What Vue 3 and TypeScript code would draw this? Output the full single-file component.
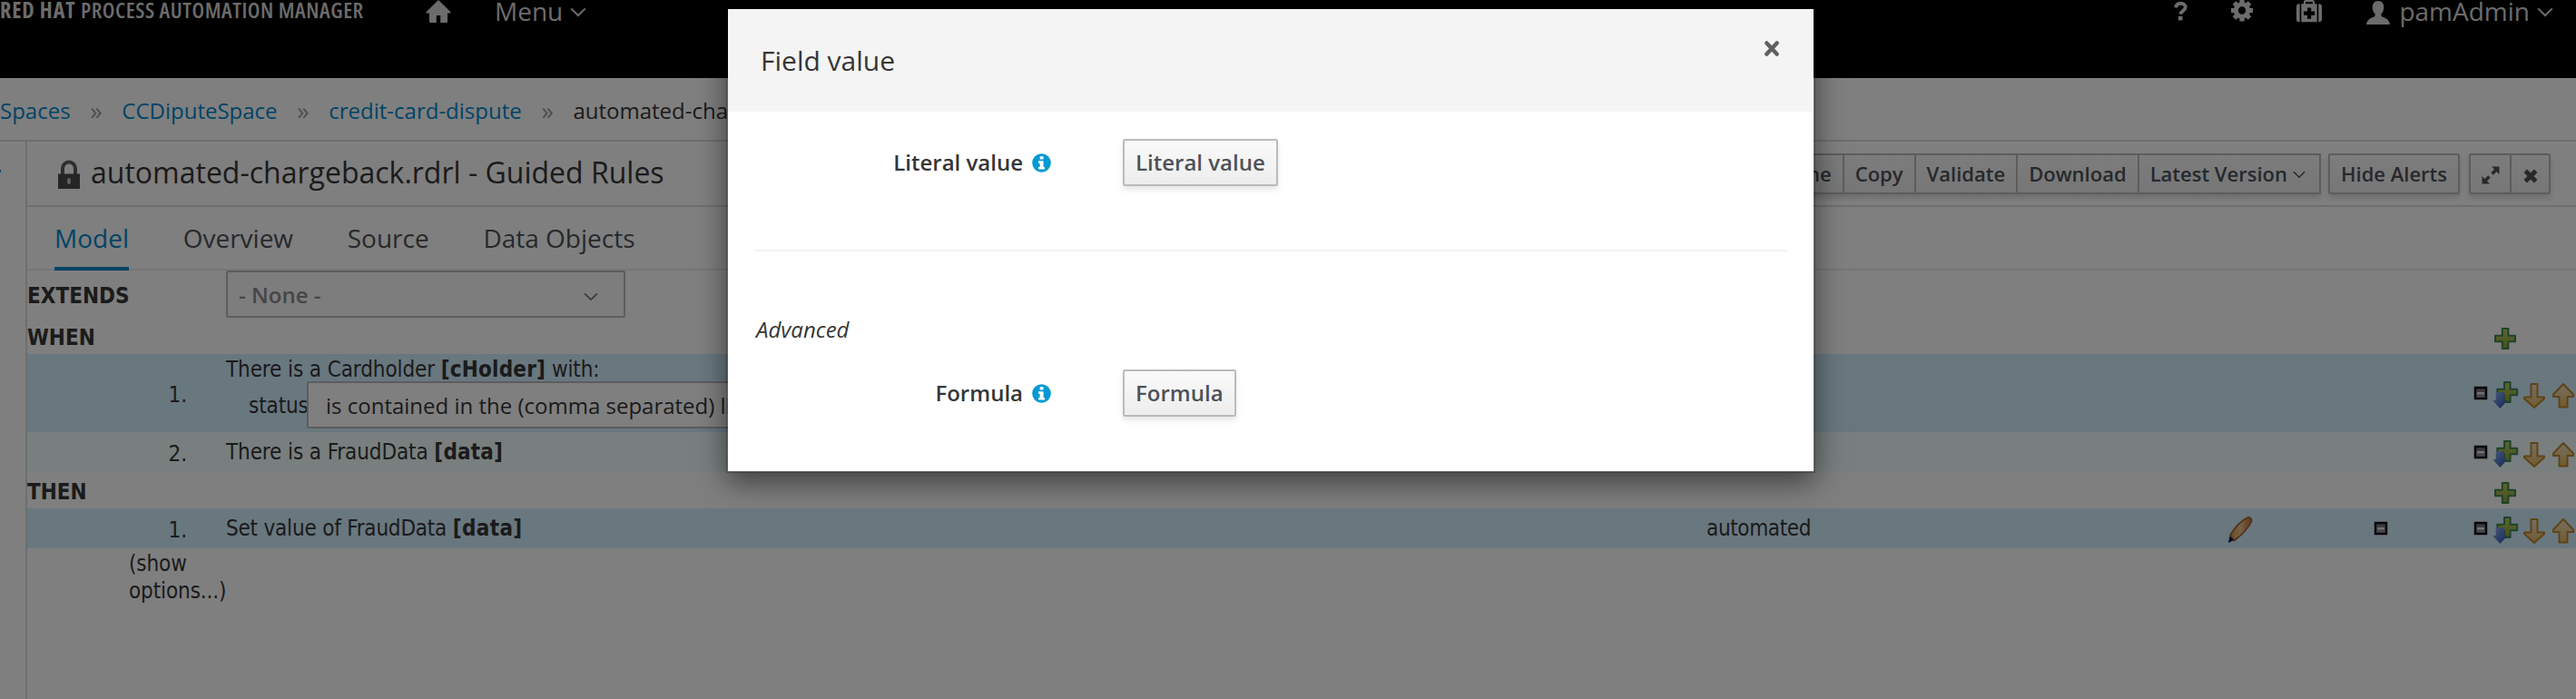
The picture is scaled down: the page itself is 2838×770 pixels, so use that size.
<script setup lang="ts">
interface Crumb { label: string; link: boolean }
interface Rule {
  no: string
  tone: 'blue' | 'pale'
  text: string
  bound: string
  tail?: string
  field?: string
  operator?: string
  value?: string
}
interface Section { title: string; rules: Rule[] }
interface Choice { label: string }

const crumbs: Crumb[] = [
  { label: 'Spaces', link: true },
  { label: 'CCDiputeSpace', link: true },
  { label: 'credit-card-dispute', link: true },
  { label: 'automated-chargeback', link: false },
]
const tabs: string[] = ['Model', 'Overview', 'Source', 'Data Objects']
const activeTab = 'Model'
const actions: string[] = ['Rename', 'Copy', 'Validate', 'Download']
const sections: Section[] = [
  {
    title: 'WHEN',
    rules: [
      {
        no: '1.', tone: 'blue', text: 'There is a Cardholder ', bound: '[cHolder]', tail: ' with:',
        field: 'status', operator: 'is contained in the (comma separated) list',
      },
      { no: '2.', tone: 'pale', text: 'There is a FraudData ', bound: '[data]' },
    ],
  },
  {
    title: 'THEN',
    rules: [
      { no: '1.', tone: 'blue', text: 'Set value of FraudData ', bound: '[data]', value: 'automated' },
    ],
  },
]
const basic: Choice = { label: 'Literal value' }
const advanced: Choice = { label: 'Formula' }
</script>

<template>
  <div class="page">
    <svg class="defs" width="0" height="0" aria-hidden="true">
      <defs>
        <linearGradient id="gPlus" x1="0" y1="0" x2="0" y2="1">
          <stop offset="0" stop-color="#bccc5c" /><stop offset="1" stop-color="#88a03a" />
        </linearGradient>
        <linearGradient id="gBlue" x1="0" y1="0" x2="1" y2="1">
          <stop offset="0" stop-color="#8fb2f4" /><stop offset="1" stop-color="#2a4ca8" />
        </linearGradient>
        <linearGradient id="gGold" x1="0" y1="0" x2="0" y2="1">
          <stop offset="0" stop-color="#eee0c4" /><stop offset="1" stop-color="#e2b860" />
        </linearGradient>
        <linearGradient id="gPen" x1="0" y1="0" x2="1" y2="0">
          <stop offset="0" stop-color="#d8984e" /><stop offset="0.5" stop-color="#eec08a" /><stop offset="1" stop-color="#b87238" />
        </linearGradient>
        <linearGradient id="gBox" x1="0" y1="0" x2="0" y2="1">
          <stop offset="0" stop-color="#666" /><stop offset="1" stop-color="#999" />
        </linearGradient>
        <symbol id="plus" viewBox="0 0 32 32">
          <path d="M12.8 5h6.6v7.7h7.6v6.6h-7.6V27h-6.6v-7.700H5v-6.600h7.800z" fill="url(#gPlus)" stroke="#3f8650" stroke-width="2" stroke-linejoin="round" />
        </symbol>
        <symbol id="plusDown" viewBox="0 0 32 32">
          <path d="M15 1h6.600v7.700h7.600v6.600h-7.600V23h-6.600v-7.700H7.300V8.700H15z" fill="url(#gPlus)" stroke="#3f8658" stroke-width="2" stroke-linejoin="round" />
          <path d="M5.700 12h9.300v9h3.600L10.400 30 2.200 21h3.500z" fill="url(#gBlue)" />
        </symbol>
        <symbol id="down" viewBox="0 0 32 32">
          <path d="M12.500 3h7v14.500H27V19L16 29 5 19v-1.500h7.500z" fill="url(#gGold)" stroke="#bd8730" stroke-width="2" stroke-linejoin="round" />
        </symbol>
        <symbol id="up" viewBox="0 0 32 32">
          <path d="M16 3l11 11.500V17h-6.500v11.500h-9V17H5v-2.500z" fill="url(#gGold)" stroke="#bd8730" stroke-width="2" stroke-linejoin="round" />
        </symbol>
        <symbol id="minus" viewBox="0 0 32 32">
          <rect x="12.500" y="4.500" width="17" height="17" rx="1" fill="#ddd" opacity="0.500" />
          <rect x="15" y="7" width="12" height="12" fill="url(#gBox)" stroke="#0a0a20" stroke-width="2.400" />
          <rect x="17" y="12" width="8" height="2.400" fill="#e4e4e4" />
        </symbol>
        <symbol id="chevron" viewBox="0 0 18 11">
          <path d="M1.200 1.400L9 9l7.800-7.600" fill="none" stroke="currentColor" stroke-width="2" />
        </symbol>
        <symbol id="info" viewBox="0 0 21 21">
          <circle cx="10.500" cy="10.500" r="10.300" fill="#0099d3" />
          <rect x="8.600" y="3.200" width="4" height="3.400" rx="0.600" fill="#fff" />
          <path d="M7 8.300h5.600v6.700H14v2.500H7V15h1.600v-4.200H7z" fill="#fff" />
        </symbol>
      </defs>
    </svg>

    <header class="nav">
      <div class="brand"><b>RED HAT</b><span class="product">PROCESS AUTOMATION MANAGER</span></div>
      <svg class="home" width="28" height="26" viewBox="0 0 28 26"><path d="M14 0l13.500 13.300c.4.600.1 1.200-.6 1.200H24V23.500c0 .9-.5 1.500-1.400 1.500H16.200V17h-4.400v8H5.400C4.500 25 4 24.400 4 23.500v-9H1.100c-.7 0-1-.6-.6-1.200z" fill="currentColor" /></svg>
      <span class="menu">Menu</span>
      <svg class="chev" width="18" height="11"><use href="#chevron" /></svg>
      <div class="tools">
        <svg class="help" width="15" height="21" viewBox="0 0 15 21"><path d="M2 6.300C2.600 3.300 4.600 1.800 7.400 1.800c3.200 0 5.300 1.700 5.300 4.300 0 3.800-5.200 3.800-5.200 7.600" fill="none" stroke="currentColor" stroke-width="3.800" /><rect x="4.900" y="15.800" width="4.600" height="4.600" fill="currentColor" /></svg>
        <svg class="gear" width="24" height="25" viewBox="-12 -12.500 24 25">
          <circle r="6.700" fill="none" stroke="currentColor" stroke-width="5" />
          <g fill="currentColor">
            <rect v-for="n in 8" :key="n" x="-2.600" y="-12" width="5.200" height="5" :transform="`rotate(${n * 45})`" />
          </g>
        </svg>
        <svg class="kit" width="28" height="25" viewBox="0 0 28 25" fill="currentColor">
          <path d="M3.700 4.300v20H3a3 3 0 0 1-3-3v-14a3 3 0 0 1 3-3zM24.300 4.300v20h.7a3 3 0 0 0 3-3v-14a3 3 0 0 0-3-3z" />
          <path fill-rule="evenodd" d="M5.300 4.300H8V2.200C8 .8 8.800 0 10 0h8c1.200 0 2 .8 2 2.200v2.100h2.700v20H5.300zM10 2v2.300h8V2zM12 8.500v4H8v4.200h4v4h4.200v-4h4v-4.200h-4v-4z" />
        </svg>
        <svg class="user" width="26" height="26" viewBox="0 0 26 26"><path d="M13 0c4 0 6.300 2.800 6.300 7 0 3.200-1.300 5.700-2.900 7.200-.5 2 .3 3 2.300 3.900 3.300 1.400 6.300 2.600 7.300 7.900H0c1-5.300 4-6.500 7.300-7.900 2-.9 2.800-1.900 2.300-3.900C8 12.700 6.700 10.200 6.700 7c0-4.200 2.300-7 6.300-7z" fill="currentColor" /></svg>
        <span class="who">pamAdmin</span>
        <svg class="chev" width="18" height="11"><use href="#chevron" /></svg>
      </div>
    </header>

    <nav class="crumbs">
      <template v-for="(c, i) in crumbs" :key="c.label">
        <span v-if="i > 0" class="sep">»</span>
        <span :class="c.link ? 'link' : 'here'">{{ c.label }}</span>
      </template>
    </nav>

    <div class="body">
      <aside class="rail"><i></i></aside>
      <main class="editor">
        <div class="titlebar">
          <svg class="lock" width="26" height="33" viewBox="0 0 26 33">
            <path d="M6 16V9.500a7 7 0 0 1 14 0V16" fill="none" stroke="#5c5c5c" stroke-width="4" />
            <rect x="1" y="15.500" width="24" height="16.500" fill="#4a4a4a" />
            <rect x="11" y="20" width="4" height="7" rx="2" fill="#bbb" />
          </svg>
          <h1>automated-chargeback.rdrl - Guided Rules</h1>
          <div class="bar">
            <div class="group">
              <button v-for="a in actions" :key="a">{{ a }}</button>
              <button class="version">Latest Version<svg width="14" height="9"><use href="#chevron" /></svg></button>
            </div>
            <div class="group alerts"><button>Hide Alerts</button></div>
            <div class="group icons">
              <button>
                <svg width="20" height="20" viewBox="0 0 20 20" fill="currentColor"><path d="M11 .5h8.500V9l-3-3-3.700 3.700-2.500-2.500L14 3.500zM9 19.500H.5V11l3 3 3.700-3.700 2.500 2.500L6 16.500z" /></svg>
              </button>
              <button>
                <svg width="16" height="16" viewBox="0 0 16 16"><path d="M2.300 2.300l11.400 11.400M13.700 2.300L2.300 13.700" stroke="currentColor" stroke-width="5" /></svg>
              </button>
            </div>
          </div>
        </div>

        <div class="tabs">
          <a v-for="t in tabs" :key="t" :class="{ active: t === activeTab }">{{ t }}</a>
        </div>

        <div class="extends">
          <b>EXTENDS</b>
          <div class="select">- None -<svg width="16" height="10"><use href="#chevron" /></svg></div>
        </div>

        <template v-for="s in sections" :key="s.title">
          <div class="section"><b>{{ s.title }}</b><svg class="ic"><use href="#plus" /></svg></div>
          <div v-for="r in s.rules" :key="r.no" class="rule" :class="[r.tone, { tall: r.field, valued: r.value }]">
            <span class="no">{{ r.no }}</span>
            <div class="what">
              <div class="line">{{ r.text }}<b>{{ r.bound }}</b>{{ r.tail }}</div>
              <div v-if="r.field" class="cond"><span class="field">{{ r.field }}</span><div class="op">{{ r.operator }}</div></div>
            </div>
            <span class="value">{{ r.value }}</span>
            <div class="edit">
              <svg v-if="r.value" class="pen" width="32" height="34" viewBox="0 0 32 34">
                <path d="M2.500 23.500L24 1.500h5.500l1 7L11 30l-8.500 2z" fill="#ddd" opacity="0.250" />
                <path d="M5 22.500C10 14 17 6.500 24.500 3c2-.5 4.500 1.500 4 4.500C25 15 18 22 9.500 28.500z" fill="url(#gPen)" stroke="#99602f" stroke-width="1.600" />
                <path d="M4.500 23.500l4.500 4.500-6 3z" fill="#101048" />
              </svg>
            </div>
            <div class="remove"><svg v-if="r.value" class="ic"><use href="#minus" /></svg></div>
            <div class="moves">
              <svg v-for="k in ['minus', 'plusDown', 'down', 'up']" :key="k" class="ic"><use :href="'#' + k" /></svg>
            </div>
          </div>
        </template>
        <div class="more">(show options...)</div>
      </main>
    </div>

    <div class="backdrop"></div>

    <section class="modal">
      <div class="head">
        <h2>Field value</h2>
        <svg class="close" width="16" height="19" viewBox="0 0 16 19"><path d="M2.400 3.400l11.200 12.200M13.600 3.400L2.400 15.600" stroke="#606060" stroke-width="4.400" stroke-linecap="round" /></svg>
      </div>
      <div class="content">
        <div class="row">
          <label>{{ basic.label }}</label>
          <svg width="21" height="21"><use href="#info" /></svg>
          <button>{{ basic.label }}</button>
        </div>
        <hr />
        <em>Advanced</em>
        <div class="row">
          <label>{{ advanced.label }}</label>
          <svg width="21" height="21"><use href="#info" /></svg>
          <button>{{ advanced.label }}</button>
        </div>
      </div>
    </section>
  </div>
</template>

<style>
body { margin: 0; overflow: hidden; }
</style>

<style scoped>
* { box-sizing: border-box; }
.page {
  position: relative; width: 2838px; height: 770px; overflow: hidden; background: #fff;
  font-family: "Open Sans", sans-serif; font-size: 24px; color: #363636;
  display: flex; flex-direction: column;
}
svg { display: block; flex: none; }
.defs { position: absolute; }

.nav { flex: none; height: 86px; display: flex; align-items: flex-start; background: #000; color: #d8d8d8; font-size: 28px; line-height: 24px; white-space: nowrap; }
.brand { width: 469px; display: flex; font-size: 24px; line-height: 22px; font-stretch: 75%; }
.brand b { width: 89px; letter-spacing: 0.900px; }
.product { font-weight: 600; letter-spacing: 0.550px; }
.home { margin-right: 48px; }
.menu { margin-right: 8px; }
.chev { margin-top: 8px; }
.tools { margin-left: auto; display: flex; align-items: flex-start; margin-right: 25px; }
.help { margin: 2px 48px 0 0; }
.gear { margin: -1px 48px 0 0; }
.kit { margin-right: 49px; }
.user { margin: 1px 10px 0 0; }
.who { margin-right: 8px; }

.crumbs { flex: none; height: 70px; padding-top: 3px; display: flex; align-items: center; border-bottom: 2px solid #dcdcdc; white-space: nowrap; }
.link { color: #0088ce; }
.sep { width: 56.700px; text-align: center; font-size: 27px; color: #9c9c9c; }

.body { flex: 1; display: flex; }
.rail { flex: none; width: 30px; border-right: 2px solid #dcdcdc; }
.rail i { display: block; width: 1px; height: 3px; margin-top: 31px; background: #0088ce; }
.editor { flex: 1; min-width: 0; }

.titlebar { height: 72px; border-bottom: 2px solid #dcdcdc; display: flex; align-items: center; padding: 0 28px 3px 33px; }
.lock { margin: 5px 11px 0 0; }
h1 { margin: 0; font-size: 32px; font-weight: 400; line-height: 44px; white-space: nowrap; }
.bar { margin-left: auto; display: flex; padding-top: 4px; }
.group { display: flex; border: 2px solid #bbb; box-shadow: 0 4px 6px rgba(3, 3, 3, 0.150); height: 45px; background: linear-gradient(#fafafa, #ededed); }
.group button { border: 0; border-left: 2px solid #bbb; background: none; padding: 0 12px; font: 600 22px/41px "Open Sans", sans-serif; color: #4d5258; display: flex; align-items: center; white-space: nowrap; }
.group button:first-child { border-left: 0; }
.group .version { padding-right: 15px; }
.version svg { margin: 1px 0 0 6px; }
.alerts { margin: 0 10px 0 8px; border-radius: 2px; }
.icons { border-radius: 2px; width: 90px; }
.icons button { width: 43px; padding: 4px 0 0; justify-content: center; }
.icons button:first-child { width: 43px; padding-top: 2px; }

.tabs { height: 70px; border-bottom: 2px solid #ededed; display: flex; gap: 59.700px; padding-left: 30px; font-size: 28px; line-height: 68px; }
.tabs a { height: 70px; color: #4d5258; }
.tabs .active { color: #0088ce; border-bottom: 4px solid #0088ce; }

.extends, .section, .rule, .more { font-family: "DejaVu Sans Condensed", "DejaVu Sans", sans-serif; font-stretch: condensed; letter-spacing: -0.100px; }
.extends { height: 52px; display: flex; align-items: center; }
.extends b { width: 219px; padding-top: 4px; letter-spacing: 0; }
.select { width: 440px; height: 52px; border: 2px solid #bbb; border-radius: 2px; background: #fafafa; padding: 0 28px 0 12px; display: flex; align-items: center; justify-content: space-between; font: 600 24px "Open Sans", sans-serif; letter-spacing: 0; color: #8b8d8f; }
.select svg { margin-top: 6px; color: #777; }
.section { height: 40px; display: flex; align-items: center; justify-content: space-between; padding-right: 62px; }
.section b { padding-top: 4px; letter-spacing: 0; }
.ic { width: 32px; height: 32px; margin-top: 6px; }
.rule { height: 44px; display: grid; grid-template-columns: 219px 1631px 572px 150px 110px 128px; align-items: center; overflow: hidden; }
.rule.tall { height: 86px; }
.blue { background: #d2eeff; }
.pale { background: #f1fffc; }
.no { width: 176px; text-align: right; padding-top: 4px; }
.line { white-space: pre; line-height: 27px; }
.line b { letter-spacing: 0.200px; }
.valued .line { letter-spacing: -0.200px; }
.valued .line b { letter-spacing: 0.350px; }
.value { letter-spacing: -0.350px; }
.tall .what { align-self: start; padding-top: 3px; }
.tall .line { height: 27px; line-height: 29px; }
.cond { display: flex; padding-left: 25px; }
.field { width: 64px; line-height: 55px; height: 52px; white-space: nowrap; }
.op { width: 900px; height: 52px; border: 2px solid #bbb; border-radius: 2px; background: #fff; padding-left: 19px; font: 24px/49px "Open Sans", sans-serif; letter-spacing: 0; }
.pen { margin-top: 3px; }
.moves { display: flex; }
.more { width: 122px; padding: 2px 0 0 112px; line-height: 30px; }

.backdrop { position: absolute; inset: 0; background: rgba(0, 0, 0, 0.500); }
.modal { position: absolute; left: 800px; top: 8px; width: 1200px; height: 513px; background: #fff; background-clip: padding-box; border: 2px solid rgba(0, 0, 0, 0.200); box-shadow: 0 10px 30px rgba(0, 0, 0, 0.500); }
.head { height: 113px; background: #f4f4f4; display: flex; justify-content: space-between; padding: 34px 38px 0 36px; }
h2 { margin: 0; font-size: 30px; font-weight: 400; line-height: 45px; }
.content { padding: 30px 29px 0 30px; }
.row { display: flex; align-items: center; height: 52px; }
.row label { width: 295px; text-align: right; font-weight: 600; margin-right: 10px; padding-bottom: 1px; }
.row button { margin-left: 79px; height: 52px; padding: 0 12px 1px; border: 2px solid #bbb; border-radius: 2px; background: linear-gradient(#fafafa, #ededed); box-shadow: 0 4px 6px rgba(3, 3, 3, 0.100); font: 600 24px "Open Sans", sans-serif; color: #4d5258; }
hr { margin: 70px 0 70px; border: 0; border-top: 2px solid #f1f1f1; }
em { display: block; line-height: 32px; margin-bottom: 28px; padding-left: 1px; }
</style>
